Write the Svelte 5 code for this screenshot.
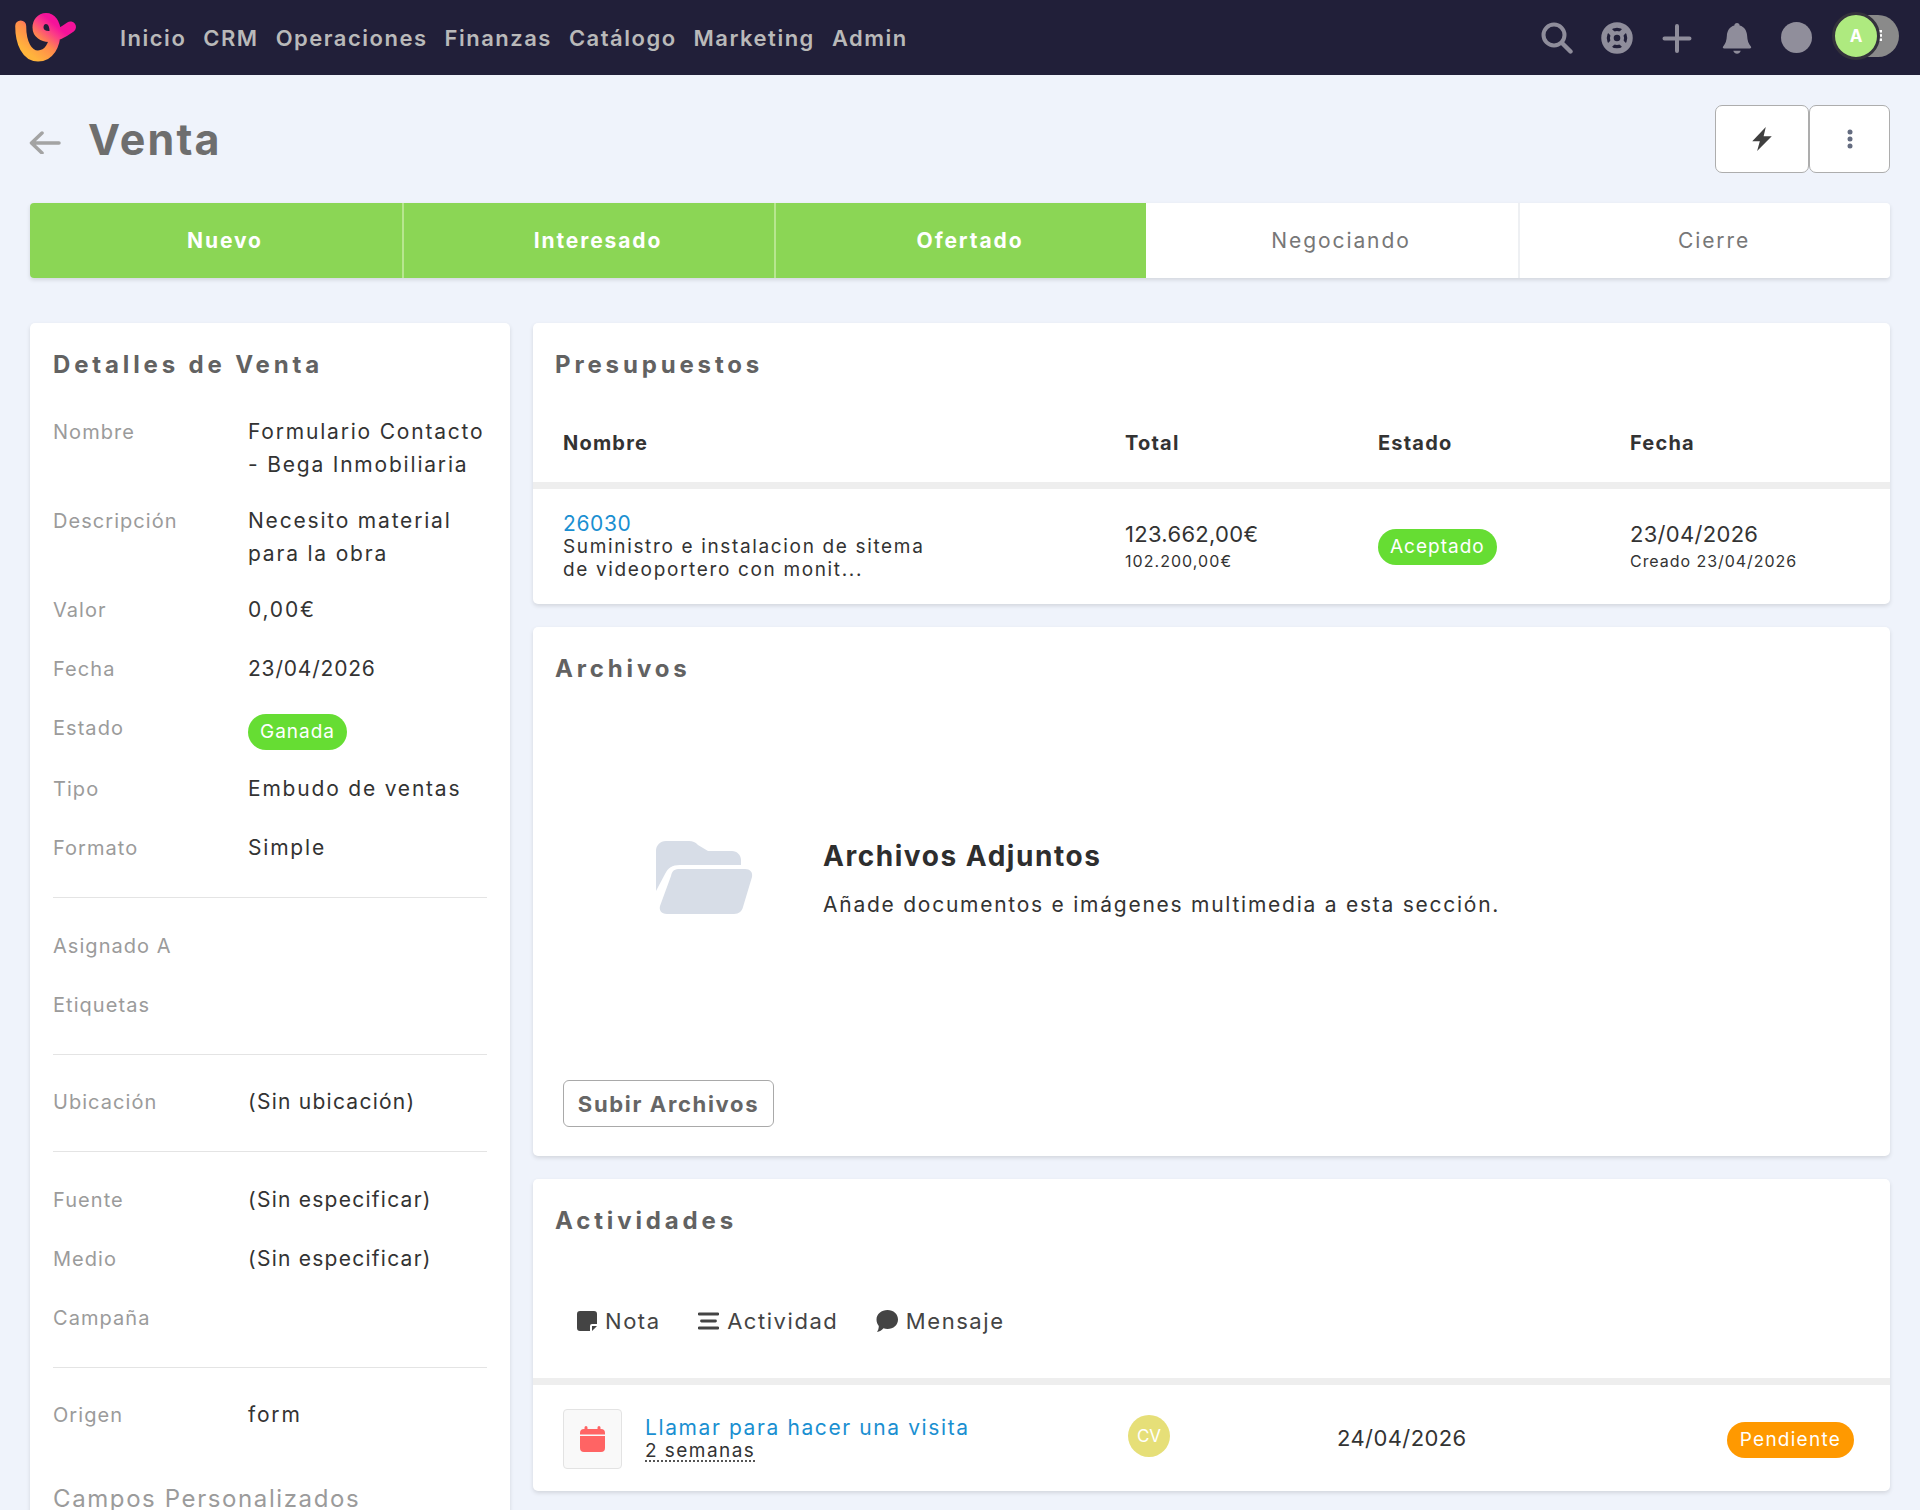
<script>
  const nav = ['Inicio', 'CRM', 'Operaciones', 'Finanzas', 'Catálogo', 'Marketing', 'Admin'];
  const stages = [
    { name: 'Nuevo', done: true },
    { name: 'Interesado', done: true },
    { name: 'Ofertado', done: true },
    { name: 'Negociando', done: false },
    { name: 'Cierre', done: false }
  ];
  const groups = [
    [
      { k: 'Nombre', v: 'Formulario Contacto - Bega Inmobiliaria' },
      { k: 'Descripción', v: 'Necesito material para la obra' },
      { k: 'Valor', v: '0,00€' },
      { k: 'Fecha', v: '23/04/2026', kind: 'date' },
      { k: 'Estado', badge: 'Ganada' },
      { k: 'Tipo', v: 'Embudo de ventas' },
      { k: 'Formato', v: 'Simple' }
    ],
    [{ k: 'Asignado A', v: '' }, { k: 'Etiquetas', v: '' }],
    [{ k: 'Ubicación', v: '(Sin ubicación)', kind: 'tight' }],
    [
      { k: 'Fuente', v: '(Sin especificar)', kind: 'tight' },
      { k: 'Medio', v: '(Sin especificar)', kind: 'tight' },
      { k: 'Campaña', v: '' }
    ],
    [{ k: 'Origen', v: 'form' }]
  ];
</script>

<div class="page">
  <header class="topbar">
    <svg class="logo" viewBox="0 0 80 65" aria-label="logo">
      <defs>
        <linearGradient id="lg" gradientUnits="userSpaceOnUse" x1="20" y1="45" x2="45" y2="15">
          <stop offset="0" stop-color="#ffb43c" />
          <stop offset="0.45" stop-color="#ff8a4c" />
          <stop offset="0.8" stop-color="#fb3a88" />
          <stop offset="1" stop-color="#f5129a" />
        </linearGradient>
      </defs>
      <path d="M15.700 21C15.700 38 22 51 33 51C44 51 50 40 50 27C50 18 46 13.500 41 13.500C36 13.500 33 18 33 22.500C33 28 38 32 45 31.500C52 31 60 26 65.500 22" fill="none" stroke="url(#lg)" stroke-width="11" stroke-linecap="round" />
    </svg>
    <nav class="menu">
      {#each nav as item}
        <span>{item}</span>
      {/each}
    </nav>
    <div class="tools">
      <svg class="tool" viewBox="0 0 32 32"><circle cx="13" cy="13" r="10.500" fill="none" stroke="#8f8d9b" stroke-width="4" /><path d="M21 21l8.500 8.500" stroke="#8f8d9b" stroke-width="4.400" stroke-linecap="round" /></svg>
      <svg class="tool" viewBox="0 0 32 32"><circle cx="16" cy="16" r="13" fill="none" stroke="#8f8d9b" stroke-width="5.500" /><circle cx="16" cy="16" r="5.200" fill="none" stroke="#8f8d9b" stroke-width="3.800" /><path d="M7 7l6 6M25 7l-6 6M7 25l6-6M25 25l-6-6" stroke="#8f8d9b" stroke-width="5.500" /></svg>
      <svg class="tool" viewBox="0 0 32 32"><path d="M16 4v25M3.500 16.500h25" stroke="#8f8d9b" stroke-width="4" stroke-linecap="round" /></svg>
      <svg class="tool" viewBox="1.500 1 29 30"><path d="M16 2c1.500 0 2.500 1 2.500 2.300C23 5.500 25.300 9.500 25.500 14c.2 4.500 1.300 7.500 3.500 10 .7.800.2 1.800-1 1.800H4c-1.200 0-1.700-1-1-1.800 2.200-2.500 3.300-5.500 3.500-10 .2-4.500 2.500-8.500 7-9.700C13.500 3 14.500 2 16 2z" fill="#8f8d9b" /><path d="M12.500 28h7c-.5 1.800-2 2.800-3.500 2.800s-3-1-3.500-2.800z" fill="#8f8d9b" /></svg>
      <span class="dot"></span>
      <div class="account">
        <svg class="acc-more" viewBox="0 0 3 11" width="3" height="11"><rect width="3" height="2.500" fill="#fff" /><rect y="4.200" width="3" height="2.500" fill="#fff" /><rect y="8.500" width="3" height="2.500" fill="#fff" /></svg>
        <span class="acc-avatar">A</span>
      </div>
    </div>
  </header>

  <div class="head">
    <svg class="back" viewBox="0 0 32 24"><path d="M30 13H3M13 3L2.500 13 13 23" fill="none" stroke="#a3a3a3" stroke-width="3.500" stroke-linecap="round" stroke-linejoin="round" /></svg>
    <h1>Venta</h1>
    <div class="actions">
      <button class="act act-a" aria-label="Acciones">
        <svg viewBox="0 0 20 24" width="22" height="26"><path d="M13.500 1L1 14h7l-2.500 9L19 9.500h-7.500z" fill="#3f3f3f" /></svg>
      </button>
      <button class="act act-b" aria-label="Más">
        <svg viewBox="0 0 8 22" width="8" height="22"><circle cx="4" cy="4" r="2.500" fill="#646c80" /><circle cx="4" cy="11" r="2.500" fill="#646c80" /><circle cx="4" cy="18" r="2.500" fill="#646c80" /></svg>
      </button>
    </div>
  </div>

  <div class="stages">
    {#each stages as s}
      <div class="stage" class:done={s.done}>{s.name}</div>
    {/each}
  </div>

  <main class="columns">
    <aside class="card details">
      <h2>Detalles de Venta</h2>
      {#each groups as group, gi}
        {#if gi > 0}<hr />{/if}
        {#each group as row}
          <div class="row" class:badge-row={row.badge}>
            <span class="key">{row.k}</span>
            {#if row.badge}
              <span class="badge-cell"><span class="pill green">{row.badge}</span></span>
            {:else}
              <span class="val" class:tight={row.kind === 'tight'} class:date={row.kind === 'date'}>{row.v}</span>
            {/if}
          </div>
        {/each}
      {/each}
      <div class="custom">Campos Personalizados</div>
    </aside>

    <div class="stack">
      <section class="card">
        <h2>Presupuestos</h2>
        <div class="table thead">
          <b>Nombre</b><b>Total</b><b>Estado</b><b>Fecha</b>
        </div>
        <div class="table tbody">
          <div class="q-name">
            <span class="link num">26030</span>
            <span class="q-desc">Suministro e instalacion de sitema<br />de videoportero con monit...</span>
          </div>
          <div class="two"><span class="big">123.662,00€</span><small>102.200,00€</small></div>
          <div><span class="pill green">Aceptado</span></div>
          <div class="two"><span class="big">23/04/2026</span><small class="created">Creado 23/04/2026</small></div>
        </div>
      </section>

      <section class="card files">
        <h2>Archivos</h2>
        <div class="empty">
          <svg class="folder" viewBox="0 0 97 73">
            <path d="M0 50V10C0 4.500 4 0 10 0H33C37 0 39 1 42 4L52 10H76C81 10 85 14 85 19V24H24C16 24 12 27 9 33z" fill="#d7dde7" />
            <path d="M15 35C16 29 19 28 24 28H89C94 28 97 31 96 36L87 66C86 70 83 73 78 73H11C5 73 3 69 4 65z" fill="#d7dde7" />
          </svg>
          <div>
            <h3>Archivos Adjuntos</h3>
            <p>Añade documentos e imágenes multimedia a esta sección.</p>
          </div>
        </div>
        <button class="upload">Subir Archivos</button>
      </section>

      <section class="card">
        <h2>Actividades</h2>
        <div class="tabs">
          <span class="tab">
            <svg viewBox="0 0 20 20" width="20" height="20"><path d="M3 0h14a3 3 0 0 1 3 3v10h-5a2 2 0 0 0-2 2v5H3a3 3 0 0 1-3-3V3a3 3 0 0 1 3-3z M15 15h5l-5 5z" fill="#444" /></svg>
            Nota
          </span>
          <span class="tab">
            <svg viewBox="0 0 21 18" width="21" height="18"><path d="M1 2h19M3.500 9h14M1 16h19" stroke="#444" stroke-width="2.800" stroke-linecap="round" /></svg>
            Actividad
          </span>
          <span class="tab">
            <svg viewBox="0 0 22 22" width="22" height="22"><path d="M11.500 0C17.500 0 22 4 22 9.500S17.500 19 11.500 19c-1.500 0-2.800-.2-4-.7C6 20 3.500 21.800 1 22c1-1.500 1.800-3.500 1.800-6C1.300 14.200.5 12 .5 9.500.5 4 5.500 0 11.500 0z" fill="#444" /></svg>
            Mensaje
          </span>
        </div>
        <div class="activity">
          <div class="cal-box">
            <svg viewBox="0 0 25 26" width="25" height="26"><path d="M6 0a1.500 1.500 0 0 1 1.500 1.500V3h10V1.500a1.500 1.500 0 0 1 3 0V3H21a4 4 0 0 1 4 4v1.500H0V7a4 4 0 0 1 4-4h.5V1.500A1.500 1.500 0 0 1 6 0z M0 10h25v12a4 4 0 0 1-4 4H4a4 4 0 0 1-4-4z" fill="#ff6464" /></svg>
          </div>
          <div class="act-text">
            <span class="link">Llamar para hacer una visita</span>
            <span class="ago">2 semanas</span>
          </div>
          <span class="cv">CV</span>
          <span class="act-date">24/04/2026</span>
          <span class="pill orange">Pendiente</span>
        </div>
      </section>
    </div>
  </main>
</div>

<style>
  :global(body) {
    margin: 0;
    background: #eff3fb;
  }
  .page {
    height: 1510px;
    overflow: hidden;
    background: #eff3fb;
    font-family: Inter, "Open Sans", sans-serif;
    color: #333;
  }
  .topbar {
    height: 75px;
    background: #211f39;
    display: flex;
    align-items: center;
  }
  .logo {
    width: 80px;
    height: 65px;
    margin-left: 5px;
    flex: none;
  }
  .menu {
    display: flex;
    margin-left: 35px;
    color: #b9b9b9;
    font-size: 22px;
    font-weight: 600;
    letter-spacing: 1.5px;
    gap: 17px;
  }
  .tools {
    margin-left: auto;
    display: flex;
    align-items: center;
    padding-right: 21px;
  }
  .tool {
    width: 32px;
    height: 32px;
    margin-right: 28px;
    flex: none;
  }
  .dot {
    width: 31px;
    height: 31px;
    border-radius: 50%;
    background: #908e9b;
    margin-right: 22px;
  }
  .account {
    position: relative;
    width: 65px;
    height: 42px;
    margin-top: -4px;
    border-radius: 21px;
    background: #8a8a8a;
  }
  .acc-more {
    position: absolute;
    left: 45px;
    top: 15px;
  }
  .acc-avatar {
    position: absolute;
    left: -2px;
    top: -3px;
    width: 42px;
    height: 42px;
    border: 3px solid #33323c;
    border-radius: 50%;
    background: #aeea7f;
    color: #fff;
    font-weight: 700;
    font-size: 17px;
    display: flex;
    align-items: center;
    justify-content: center;
  }
  .head {
    height: 128px;
    display: flex;
    align-items: center;
    padding: 0 30px;
  }
  .back {
    width: 32px;
    height: 24px;
    margin-top: 6px;
    margin-left: -1px;
    flex: none;
  }
  h1 {
    margin: 0 0 0 27px;
    font-size: 43px;
    font-weight: 700;
    color: #6e6e6e;
    letter-spacing: 2.2px;
  }
  .actions {
    margin-left: auto;
    display: flex;
  }
  .act {
    height: 68px;
    background: #fff;
    border: 1.5px solid #adadad;
    border-radius: 7px;
    padding: 0;
    display: flex;
    align-items: center;
    justify-content: center;
  }
  .act-a {
    width: 94px;
  }
  .act-b {
    width: 81px;
  }
  .stages {
    margin: 0 30px;
    display: grid;
    grid-template-columns: repeat(5, 1fr);
    height: 75px;
    border-radius: 4px;
    overflow: hidden;
    box-shadow: 0 2px 4px rgba(0, 0, 0, 0.12);
  }
  .stage {
    background: #fff;
    color: #777;
    font-size: 21px;
    letter-spacing: 1.9px;
    display: flex;
    align-items: center;
    justify-content: center;
    padding-left: 18px;
  }
  .stage.done {
    background: #8bd655;
    color: #fff;
    font-weight: 700;
  }
  .stage:nth-child(2),
  .stage:nth-child(3) {
    border-left: 2px solid #b7e68f;
  }
  .stage:nth-child(5) {
    border-left: 2px solid #eef0f3;
  }
  .columns {
    margin: 45px 30px 0;
    display: grid;
    grid-template-columns: 480px 1fr;
    gap: 23px;
    align-items: start;
  }
  .card {
    background: #fff;
    border-radius: 5px;
    box-shadow: 0 2px 4px rgba(0, 0, 0, 0.12);
    overflow: hidden;
  }
  h2 {
    margin: 0;
    padding: 23px 22px 0;
    font-size: 24px;
    line-height: 38px;
    font-weight: 700;
    color: #626262;
    letter-spacing: 3.85px;
  }
  .details {
    padding-bottom: 40px;
  }
  .details h2 {
    margin-bottom: 31px;
    padding-left: 23px;
  }
  .row {
    display: grid;
    grid-template-columns: 195px 1fr;
    margin: 0 23px 23px;
    min-height: 36px;
    font-size: 20px;
    line-height: 33px;
    letter-spacing: 1.05px;
  }
  .badge-row {
    height: 38px;
  }
  .badge-cell {
    display: block;
    height: 38px;
    padding-top: 3px;
  }
  .key {
    color: #9b9b9b;
    padding-top: 1px;
  }
  .val {
    color: #333;
    font-size: 21px;
    letter-spacing: 1.8px;
  }
  .val.tight {
    letter-spacing: 1.25px;
  }
  .val.date {
    letter-spacing: 0.8px;
  }
  hr {
    border: none;
    border-top: 1px solid #e4e4e4;
    margin: 30px 23px 30.5px;
  }
  .custom {
    margin: 50px 23px 0;
    line-height: 29px;
    color: #9b9b9b;
    font-size: 24px;
    letter-spacing: 1.6px;
  }
  .pill {
    display: inline-block;
    color: #fff;
    border-radius: 18px;
    height: 36px;
    line-height: 36px;
    padding: 0 12px;
    font-size: 19px;
    letter-spacing: 1px;
  }
  .green {
    background: #66dd33;
  }
  .stack {
    display: flex;
    flex-direction: column;
    gap: 23px;
  }
  .table {
    display: grid;
    grid-template-columns: 562px 253px 252px 1fr;
    padding-left: 30px;
    font-size: 19px;
  }
  .thead {
    margin-top: 40.5px;
    height: 57.5px;
    line-height: 37px;
    font-size: 20px;
    border-bottom: 7px solid #eeeeee;
    color: #333;
    letter-spacing: 1.2px;
  }
  .tbody {
    height: 115px;
    align-items: center;
  }
  .q-name {
    display: flex;
    flex-direction: column;
    line-height: 23px;
  }
  .link {
    color: #1a8fd1;
    letter-spacing: 1.6px;
    font-size: 21px;
  }
  .link.num {
    letter-spacing: 0.6px;
  }
  .q-desc {
    color: #333;
    letter-spacing: 1.65px;
    font-size: 19px;
  }
  .two {
    display: flex;
    flex-direction: column;
    gap: 3px;
  }
  .big {
    font-size: 22px;
    line-height: 26px;
    letter-spacing: 0.3px;
  }
  small {
    font-size: 16px;
    line-height: 22px;
    letter-spacing: 1.05px;
  }
  .created {
    letter-spacing: 0.95px;
  }
  .files {
    height: 529px;
  }
  .empty {
    display: flex;
    align-items: flex-start;
    padding: 153px 0 0 123px;
  }
  .folder {
    width: 97px;
    height: 73px;
    flex: none;
    margin-right: 70px;
  }
  h3 {
    margin: -3px 0 0;
    font-size: 28px;
    line-height: 36px;
    font-weight: 700;
    letter-spacing: 1.55px;
    color: #2e2e2e;
  }
  p {
    margin: 16px 0 0;
    font-size: 21px;
    line-height: 30px;
    letter-spacing: 1.75px;
    color: #333;
  }
  .upload {
    display: block;
    margin: 160px 0 0 30px;
    width: 211px;
    height: 47px;
    background: #fff;
    border: 1.5px solid #a9a9a9;
    border-radius: 6px;
    color: #666;
    font-family: inherit;
    font-size: 22px;
    font-weight: 700;
    letter-spacing: 1.65px;
    padding: 0;
  }
  .tabs {
    display: flex;
    height: 145px;
    padding-left: 44px;
    padding-top: 24px;
    gap: 37.5px;
    align-items: center;
    box-sizing: border-box;
    border-bottom: 7px solid #eeeeee;
  }
  .tab {
    display: flex;
    align-items: center;
    gap: 8px;
    font-size: 22px;
    letter-spacing: 1.55px;
    color: #444;
  }
  .activity {
    height: 106px;
    box-sizing: border-box;
    padding: 2px 0 0 30px;
    display: flex;
    align-items: center;
  }
  .cal-box {
    width: 59px;
    height: 60px;
    box-sizing: border-box;
    background: #f9f9f9;
    border: 1px solid #e3e3e3;
    border-radius: 4px;
    display: flex;
    align-items: center;
    justify-content: center;
    flex: none;
  }
  .act-text {
    display: flex;
    flex-direction: column;
    margin-left: 23px;
    width: 482px;
    line-height: 23px;
    flex: none;
  }
  .ago {
    align-self: flex-start;
    color: #333;
    font-size: 19px;
    letter-spacing: 1.45px;
    line-height: 23px;
    border-bottom: 2px dotted #555;
    height: 21px;
  }
  .cv {
    width: 42px;
    height: 42px;
    border-radius: 50%;
    background: #e6df78;
    color: #fff;
    font-size: 17px;
    display: flex;
    align-items: center;
    justify-content: center;
    flex: none;
    margin-top: -6px;
    margin-left: 1px;
  }
  .act-date {
    margin-left: 167px;
    margin-top: -2px;
    font-size: 22px;
    letter-spacing: 0.4px;
    color: #333;
  }
  .orange {
    background: #ff9900;
    margin-left: auto;
    margin-right: 36px;
    padding: 0 13px;
    margin-top: 2px;
    letter-spacing: 1.25px;
  }
</style>
